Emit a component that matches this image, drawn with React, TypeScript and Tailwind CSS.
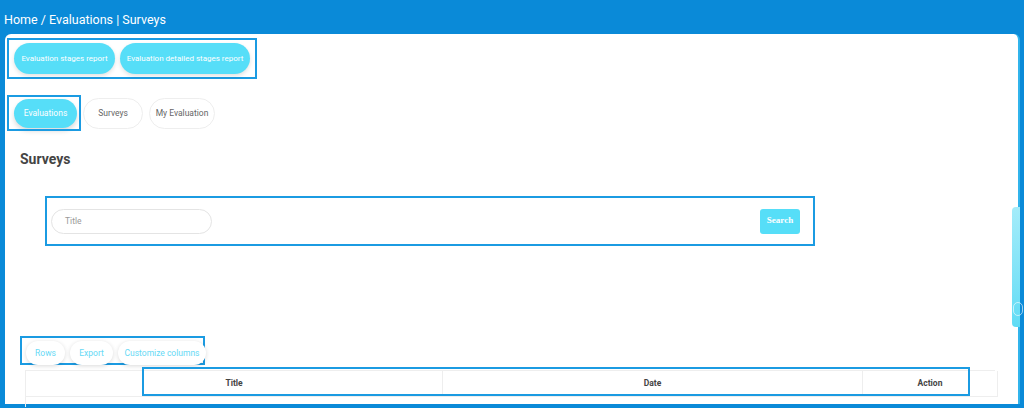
import { Fragment } from 'react'

const reportButtons = [
  { label: 'Evaluation stages report', w: 'w-[101px]' },
  { label: 'Evaluation detailed stages report', w: 'w-[130px]' },
]
const tabs = [
  { label: 'Evaluations', cls: 'h-[29px] w-[63px] bg-[#56def8] text-white shadow-[0_3px_5px_rgba(0,0,0,0.15)]' },
  { label: 'Surveys', cls: 'h-[31px] w-[60px] border border-[#eeeeee] bg-white text-[#666]' },
  { label: 'My Evaluation', cls: 'h-[31px] w-[66px] border border-[#eeeeee] bg-white text-[#666]' },
]
const tools = [
  { label: 'Rows', w: 'w-[39px]' },
  { label: 'Export', w: 'w-[43px]' },
  { label: 'Customize columns', w: 'w-[88px]' },
]

export default function App() {
  return (
    <div className="relative h-[408px] w-[1024px] overflow-hidden bg-[#0a8ad8] font-['Roboto',sans-serif]">
      {/* breadcrumb */}
      <div className="h-[34px] pl-[4px] pt-[12px] text-[12.5px] leading-[16px] text-white">
        Home / Evaluations | Surveys
      </div>

      <div className="ml-[5px] mr-[4px] h-[370px] rounded-t-[6px] border-r-[2px] border-[#31b4ec] bg-white">
        <div className="flex flex-col items-start">
          {/* reports */}
          <div className="ml-[2px] mt-[4px] flex h-[41px] w-[250px] items-center gap-[5px] border-2 border-[#1b9be2] pl-[5px]">
            {reportButtons.map((b) => (
              <button
                key={b.label}
                className={`${b.w} h-[31px] shrink-0 whitespace-nowrap rounded-full bg-[#56def8] text-[8px] text-white shadow-[0_2px_4px_rgba(0,0,0,0.12)]`}
              >
                {b.label}
              </button>
            ))}
          </div>

          {/* tabs */}
          <div className="relative mt-[16px] ml-[2px] flex h-[36px] items-center">
            <div className="absolute left-0 top-0 h-[36px] w-[74px] border-2 border-[#1b9be2]" />
            <div className="flex items-center gap-[6px] pl-[7px]">
              {tabs.map((t) => (
                <button
                  key={t.label}
                  className={`${t.cls} shrink-0 whitespace-nowrap rounded-full text-[8.5px]`}
                >
                  {t.label}
                </button>
              ))}
            </div>
          </div>

          <h2 className="ml-[15px] mt-[19px] text-[14px] font-bold leading-[18px] text-[#444]">Surveys</h2>

          {/* search */}
          <div className="ml-[40px] mt-[28px] flex h-[50px] w-[770px] items-center justify-between border-2 border-[#1b9be2] pl-[4px] pr-[13px]">
            <div className="flex h-[25px] w-[161px] items-center rounded-full border border-[#e4e4e4] pl-[13px] text-[8.5px] text-[#999]">
              Title
            </div>
            <button className="h-[25px] w-[40px] rounded-[3px] bg-[#56def8] font-['Liberation_Serif',serif] text-[9px] font-bold text-white">
              Search
            </button>
          </div>

          {/* toolbar */}
          <div className="ml-[15px] mt-[90px] flex h-[29px] w-[185px] items-start gap-[5px] border-2 border-[#1b9be2] pl-[4px]">
            {tools.map((t) => (
              <button
                key={t.label}
                className={`${t.w} mt-[3px] h-[24px] shrink-0 whitespace-nowrap rounded-full bg-white text-[8.5px] text-[#66d9f5] shadow-[0_1px_4px_rgba(0,0,0,0.15)]`}
              >
                {t.label}
              </button>
            ))}
          </div>

          {/* table */}
          <div className="relative ml-[20px] mt-[5px] w-[970px]">
            <div className="grid grid-cols-[417px_420px_135px] border-t border-l border-[#eeeeee]">
              {['Title', 'Date', 'Action'].map((h) => (
                <Fragment key={h}>
                  <div className="flex h-[26px] items-center justify-center border-r border-b border-[#eeeeee] text-[8.5px] font-bold text-[#444]">
                    {h}
                  </div>
                </Fragment>
              ))}
              <div className="col-span-3 h-[10px]" />
            </div>
            <div className="absolute left-[117px] top-[-3px] h-[29px] w-[828px] border-2 border-[#1b9be2]" />
          </div>
        </div>
      </div>

      {/* side handle */}
      <div className="absolute left-[1012px] top-[207px] h-[120px] w-[8px] rounded-l-[4px] bg-gradient-to-b from-[#a3ecfa] to-[#5fdcf5]">
        <div className="absolute left-[1px] top-[95px] h-[14px] w-[10px] rounded-full border border-white/60" />
      </div>
    </div>
  )
}
